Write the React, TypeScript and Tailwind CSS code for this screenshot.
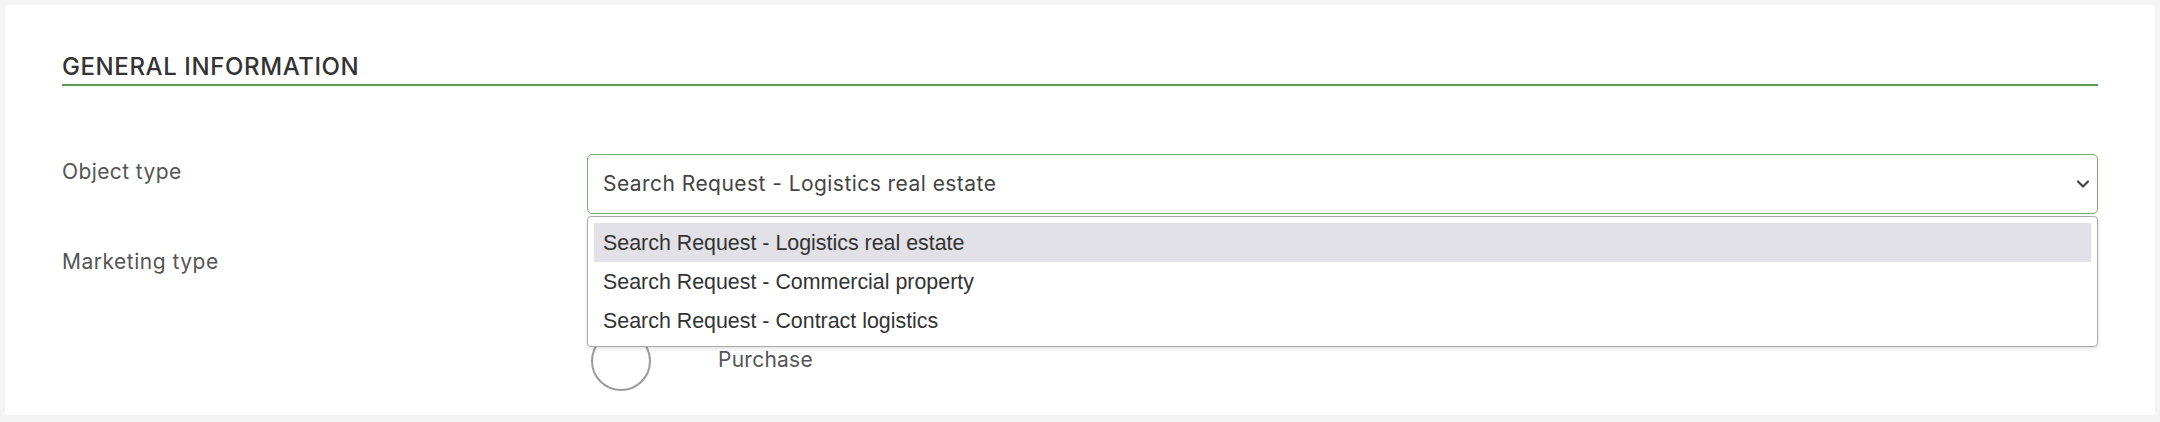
import { useState } from "react";

const options = [
  "Search Request - Logistics real estate",
  "Search Request - Commercial property",
  "Search Request - Contract logistics",
];

function Chevron() {
  return (
    <svg width="14" height="10" viewBox="0 0 14 10" className="text-[#444]">
      <polyline points="2,2.5 7,7.5 12,2.5" fill="none" stroke="currentColor" strokeWidth="2.2" strokeLinecap="round" strokeLinejoin="round" />
    </svg>
  );
}

export default function App() {
  const [selected] = useState(0);
  const [marketing] = useState<string | null>(null);

  return (
    <div className="min-h-screen bg-[#f4f4f4] px-[5px] pt-[5px] font-['Inter',sans-serif]">
      <div className="h-[410px] overflow-hidden rounded-[3px] bg-white px-[57px] pt-[46px]">
        <h2 className="border-b-2 border-[#5f9a55] pb-px text-[24px] leading-[32px] font-medium tracking-[0.6px] text-[#333]">
          GENERAL INFORMATION
        </h2>

        <div className="mt-[68px] grid grid-cols-[525px_1fr]">
          <span className="mt-[4px] text-[21px] leading-[28px] tracking-[0.4px] text-[#555]">Object type</span>
          <div className="relative">
            <div className="flex h-[60px] items-center justify-between rounded-[5px] border border-[#7aab6c] pr-[7px] pl-[15px]">
              <span className="text-[21px] tracking-[0.45px] text-[#444]">{options[selected]}</span>
              <Chevron />
            </div>
            <ul className="absolute top-[62px] right-0 left-0 z-10 rounded-[4px] border border-[#a9a9a9] bg-white p-[6px] shadow-[0_2px_4px_rgba(0,0,0,0.12)]">
              {options.map((o, i) => (
                <li
                  key={o}
                  className={`flex h-[39px] items-center px-[9px] pt-[2px] font-['Liberation_Sans',Arial,sans-serif] text-[21.4px] text-[#333] ${i === selected ? "bg-[#e1e1e7]" : ""}`}
                >
                  {o}
                </li>
              ))}
            </ul>
          </div>
        </div>

        <div className="mt-[34px] grid grid-cols-[525px_1fr]">
          <span className="text-[21px] leading-[28px] tracking-[0.5px] text-[#555]">Marketing type</span>
          <div className="mt-[83px] flex flex-col pl-[4px]">
            <label className="flex h-[60px] items-center">
              <span className={`size-[60px] shrink-0 rounded-full border-2 ${marketing === "Purchase" ? "border-[#5f9a55]" : "border-[#9b9b9b]"}`} />
              <span className="ml-[67px] -translate-y-px text-[21px] tracking-[0.25px] text-[#555]">Purchase</span>
            </label>
          </div>
        </div>
      </div>
    </div>
  );
}
